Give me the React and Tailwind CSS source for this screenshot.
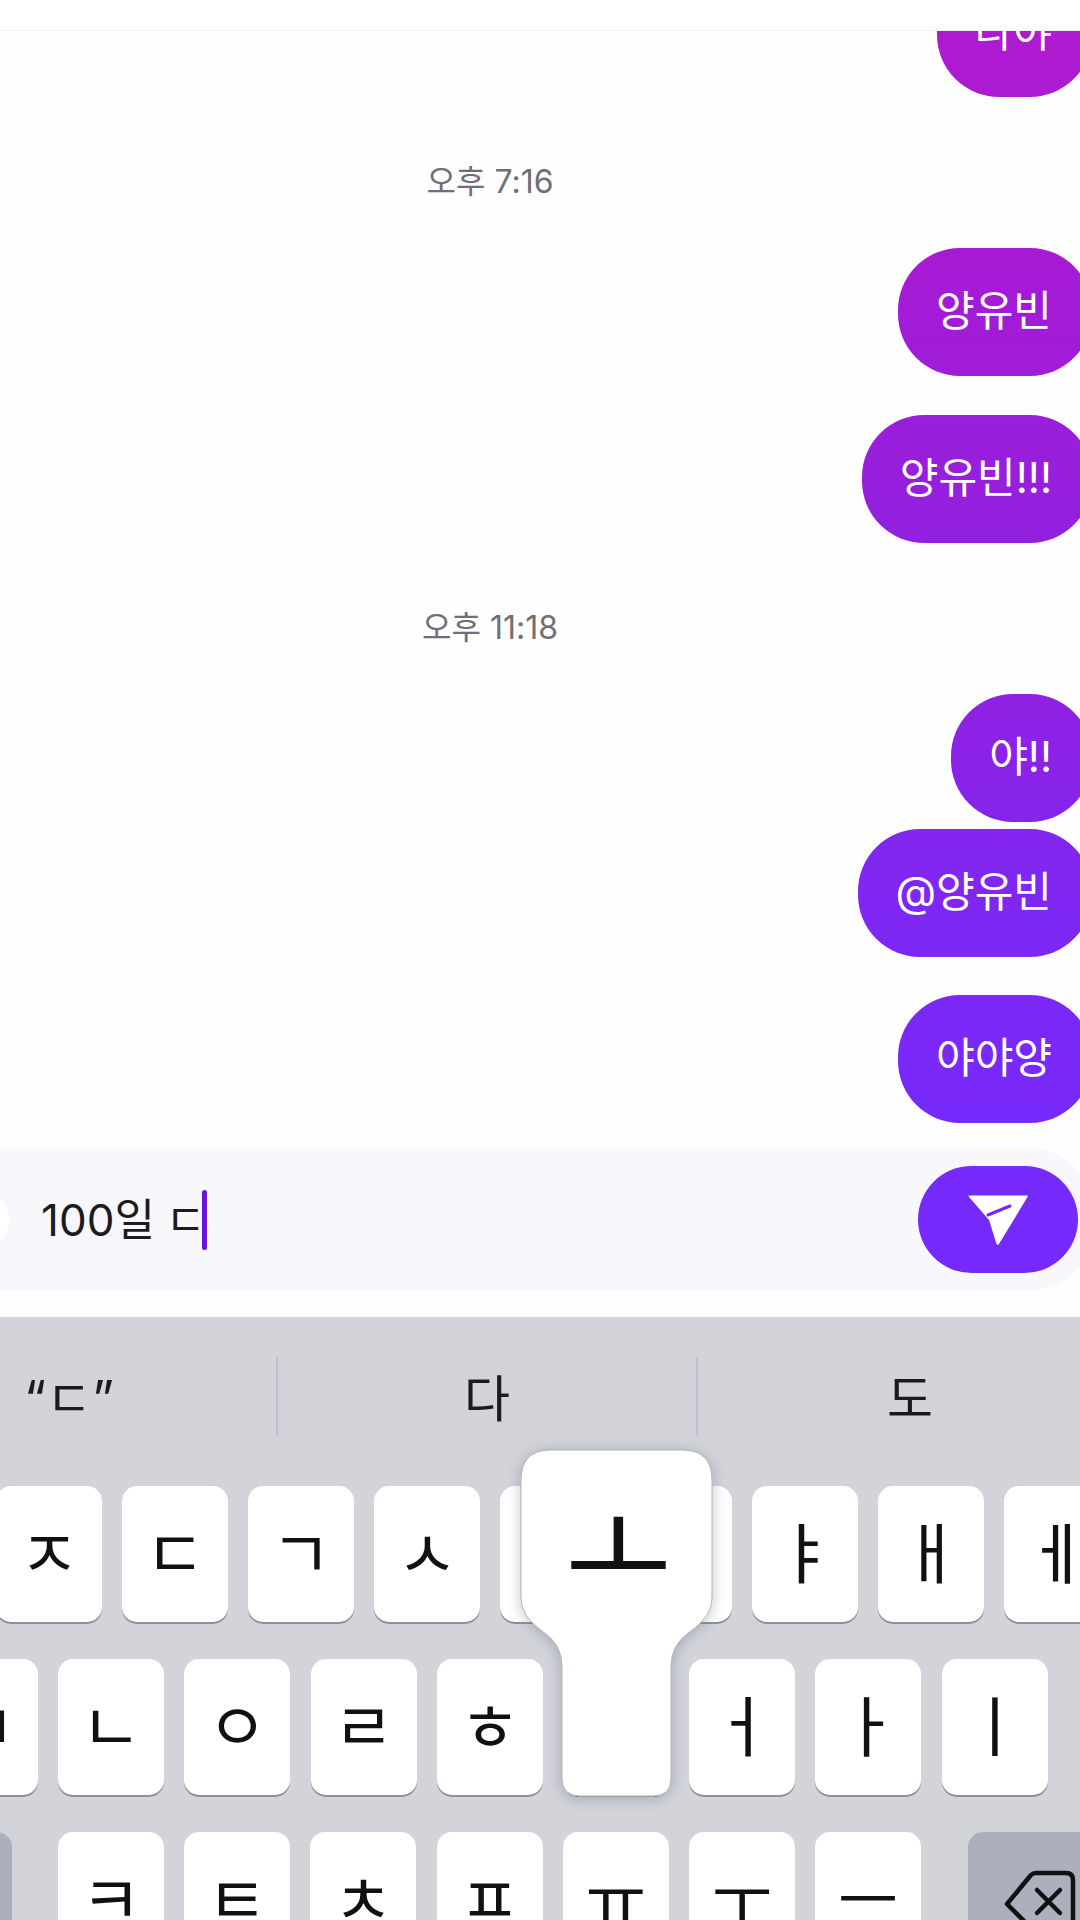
const row1 = ["ㅈ", "ㄷ", "ㄱ", "ㅅ", "ㅛ", "ㅕ", "ㅑ", "ㅐ", "ㅔ"];
const row2 = ["ㅁ", "ㄴ", "ㅇ", "ㄹ", "ㅎ", "ㅗ", "ㅓ", "ㅏ", "ㅣ"];
const row3 = ["ㅋ", "ㅌ", "ㅊ", "ㅍ", "ㅠ", "ㅜ", "ㅡ"];

function Bubble({ text, className }) {
  return (
    <div
      className={`flex h-[128px] shrink-0 items-center rounded-[62px] pb-[2px] pl-[38px] pr-[40px] -mr-[12px] text-[42px] leading-none text-white ${className}`}
    >
      {text}
    </div>
  );
}

function Time({ text, className }) {
  return (
    <div className={`h-[36px] w-full shrink-0 pr-[100px] text-center text-[32px] leading-[36px] text-[#6f6f75] ${className}`}>
      {text}
    </div>
  );
}

function Key({ label }) {
  return (
    <div className="flex h-[136px] w-[106px] shrink-0 items-center justify-center rounded-[15px] bg-white text-[66px] leading-none text-[#111] shadow-[0_2px_0_#8e9097]">
      {label}
    </div>
  );
}

export default function App() {
  return (
    <div className="flex h-[1920px] w-[1080px] flex-col overflow-hidden bg-[#fffeff] font-['Inter','Noto_Sans_CJK_KR',sans-serif]">
      <div className="h-[31px] shrink-0 border-b border-[#f2f1f4] bg-white" />

      <div className="flex h-[1118px] shrink-0 flex-col items-end overflow-hidden">
        <Bubble text="나야" className="-mt-[62px] bg-linear-to-b from-[#b318cc] to-[#ab1bd2]" />
        <Time text="오후 7:16" className="mt-[67px]" />
        <Bubble text="양유빈" className="mt-[48px] bg-linear-to-b from-[#a71ad4] to-[#9f1cd8]" />
        <Bubble text="양유빈!!!" className="mt-[39px] bg-linear-to-b from-[#9a1edb] to-[#9220df]" />
        <Time text="오후 11:18" className="mt-[67px]" />
        <Bubble text="야!!" className="mt-[48px] bg-linear-to-b from-[#9021e3] to-[#8524ea]" />
        <Bubble text="@양유빈" className="mt-[7px] bg-linear-to-b from-[#8326ee] to-[#7c27f4]" />
        <Bubble text="야야양" className="mt-[38px] bg-linear-to-b from-[#7b28f6] to-[#7729fb]" />
      </div>

      <div className="flex h-[141px] w-[1092px] shrink-0 items-center rounded-r-[60px] bg-[#f8f7fb]">
        <div className="-ml-[60px] h-[66px] w-[69px] shrink-0 rounded-full bg-white" />
        <div className="ml-[32px] flex items-center text-[44px] leading-none text-[#1c1c1e] [word-spacing:-2px]">
          <span>100일 ㄷ</span>
          <span className="-ml-[4px] h-[60px] w-[5px] rounded-full bg-[#6a14d8]" />
        </div>
        <div className="ml-auto mr-[14px] flex h-[107px] w-[160px] shrink-0 items-center justify-center rounded-[54px] bg-[#7629fb]">
          <svg width="60" height="52" viewBox="0 0 60 52">
            <path
              d="M1 1.5 H59 Q60 1.5 59.5 3 L31 50 Q29.500 52 28.500 50 L21 26 L1 3 Q0 1.500 1 1.500 Z"
              fill="#fff"
            />
            <path d="M20 21 L42 12" stroke="#7629fb" strokeWidth="3" strokeLinecap="round" fill="none" />
          </svg>
        </div>
      </div>

      <div className="h-[27px] shrink-0 bg-[#fffeff]" />

      <div className="relative flex-1 overflow-hidden bg-[#d2d4da] pt-[40px]">
        <div className="-ml-[138px] flex h-[79px] text-[50px] leading-none text-[#1b1b1d]">
          <div className="flex w-[416px] shrink-0 items-center justify-center border-r-2 border-[#bfc1c8] pt-[4px]">“ㄷ”</div>
          <div className="flex w-[420px] shrink-0 items-center justify-center border-r-2 border-[#bfc1c8] pt-[4px]">다</div>
          <div className="flex w-[424px] shrink-0 items-center justify-center pt-[4px]">도</div>
        </div>

        <div className="mt-[50px] flex flex-col gap-[37px]">
          <div className="-ml-[4px] flex gap-[20px]">
            {row1.map((k) => (
              <Key key={k} label={k} />
            ))}
          </div>
          <div className="-ml-[68px] flex gap-[20.2px]">
            {row2.map((k) => (
              <Key key={k} label={k} />
            ))}
          </div>
          <div className="-ml-[118px] flex">
            <div className="h-[136px] w-[130px] shrink-0 rounded-[15px] bg-[#acb0bd]" />
            <div className="ml-[46px] flex gap-[20.2px]">
              {row3.map((k) => (
                <Key key={k} label={k} />
              ))}
            </div>
            <div className="ml-[47px] flex h-[136px] w-[140px] shrink-0 justify-start rounded-[15px] bg-[#acb0bd] pl-[36px] pt-[38px]">
              <svg width="72" height="62" viewBox="0 0 72 62" fill="none" stroke="#111" strokeWidth="4.5" strokeLinejoin="round" strokeLinecap="round">
                <path d="M3 34 L27 5 Q29 3 32 3 H62 Q69 3 69 10 V54 Q69 60 62 60 H32 Q29 60 27 58 L3 34 Z" />
                <path d="M33 20 L56 43 M56 20 L33 43" />
              </svg>
            </div>
          </div>
        </div>

        {/* key popup over the top two rows */}
        <div className="absolute left-[521px] top-[133px] h-[346px] w-[191px]">
          <svg width="191" height="346" viewBox="0 0 191 346" className="overflow-visible drop-shadow-[0_2px_7px_rgba(60,62,75,0.3)]">
            <path
              d="M30 0 H161 Q191 0 191 30 V148 Q191 166 170 181 Q150 194 150 216 V328 Q150 346 132 346 H59 Q41 346 41 328 V216 Q41 194 21 181 Q0 166 0 148 V30 Q0 0 30 0 Z"
              fill="#fff"
              stroke="#b4b5bb"
              strokeWidth="1"
            />
          </svg>
          <div className="absolute left-[2px] top-[44px] flex h-[110px] w-[191px] items-center justify-center text-[116px] leading-none text-[#111]">
            ㅗ
          </div>
        </div>
      </div>
    </div>
  );
}
